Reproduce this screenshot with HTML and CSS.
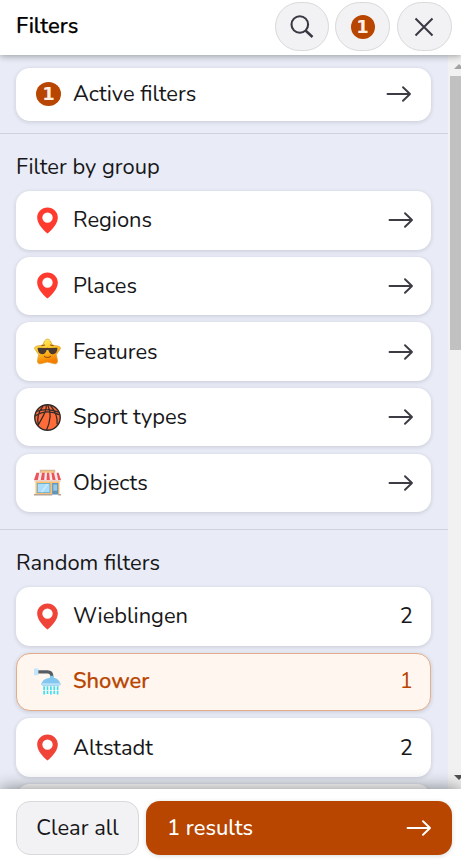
FILE: index.html
```
<!DOCTYPE html>
<html lang="en">
<head>
<meta charset="utf-8">
<title>Filters</title>
<link rel="stylesheet" href="styles.css">
</head>
<body>
<svg width="0" height="0" class="defs">
  <symbol id="arrow" viewBox="0 0 26 18"><path d="M1.500 9H24M17 2.200L24 9l-7 6.800" fill="none" stroke="currentColor" stroke-width="1.900" stroke-linecap="round" stroke-linejoin="round"/></symbol>
  <symbol id="pin" viewBox="0 0 28 28"><path fill-rule="evenodd" d="M14 .5C8 .5 3.300 5 3.300 11c0 6.500 5.700 12.500 10.700 16.500C19 23.500 24.700 17.500 24.700 11 24.700 5 20 .5 14 .5zM14 5.600a5.400 5.400 0 1 1 0 10.800 5.400 5.400 0 0 1 0-10.800z" fill="currentColor"/></symbol>
</svg>
<div class="app">
  <header class="header">
    <h1 class="title">Filters</h1>
    <button class="round search"><svg width="26" height="26" viewBox="0 0 26 26" fill="none" stroke="currentColor" stroke-width="2.100"><circle cx="10.800" cy="10.500" r="8.300"/><path d="M16.500 16.500l7 6.500" stroke-width="2.500"/></svg></button>
    <button class="round count"><span class="badge">1</span></button>
    <button class="round close"><svg width="20" height="20" viewBox="0 0 20 20" fill="none" stroke="currentColor" stroke-width="2"><path d="M1.500 1.500l17 17M18.500 1.500l-17 17"/></svg></button>
  </header>
  <div class="scroll">
    <main class="content">
      <section class="active-section">
        <a class="card active-card"><span class="badge small">1</span><span class="label">Active filters</span><svg class="arrow"><use href="#arrow"/></svg></a>
      </section>
      <section class="group">
        <h2 class="heading">Filter by group</h2>
        <a class="card"><svg class="icon pin"><use href="#pin"/></svg><span class="label">Regions</span><svg class="arrow"><use href="#arrow"/></svg></a>
        <a class="card"><svg class="icon pin"><use href="#pin"/></svg><span class="label">Places</span><svg class="arrow"><use href="#arrow"/></svg></a>
        <a class="card">
          <svg class="icon" viewBox="0 0 28 28">
            <defs><linearGradient id="gold" x2=".3" y2="1"><stop stop-color="#fff36b"/><stop offset=".5" stop-color="#ffc928"/><stop offset="1" stop-color="#f57c00"/></linearGradient></defs>
            <path d="M11 3Q14-.8 17 3L19 7.300 25 8.400Q29 9.500 26.400 12.600L23.200 17 24.500 24Q24 28 20 26.400L14 25 8 26.400Q4 28 3.500 24L4.800 17 1.600 12.600Q-1 9.500 3 8.400L9 7.300z" fill="url(#gold)" stroke="#d9a13a" stroke-width=".8"/>
            <path d="M3.800 10l9.200.4q1-.4 2 0l9.200-.4v1.500q-.5 5.300-4.700 5.300-3.700 0-4.600-4.300h-1.800q-.9 4.300-4.600 4.300-4.200 0-4.700-5.300z" fill="#4c3930"/>
            <path d="M8 8l3-.7M17 7.300l3 .7M10.800 19q3.200 2.600 6.400 0" fill="none" stroke="#975116" stroke-width="1.100" stroke-linecap="round"/>
          </svg>
          <span class="label">Features</span><svg class="arrow"><use href="#arrow"/></svg></a>
        <a class="card">
          <svg class="icon" viewBox="0 0 28 28"><circle cx="14" cy="14" r="13.200" fill="#ff6b39" stroke="#302a29" stroke-width="1.500"/><path d="M3 7.500Q14 3.500 25.500 8.500M1 12.500Q13 4.500 26 11M12.500 1Q13.500 5 10 11.500 7 17 4 22.500M14.300 1Q17 7 16.700 13 16 21 13 27M17 1.500Q25 11 24 21M9.500 2Q2 11 4.500 22" fill="none" stroke="#302a29" stroke-width="1.300"/></svg>
          <span class="label">Sport types</span><svg class="arrow"><use href="#arrow"/></svg></a>
        <a class="card">
          <svg class="icon" viewBox="0 0 28 28"><path d="M6 .8h16v5H6z" fill="#d4b69b"/><path d="M7.500 2.200h13v2h-13z" fill="#ffc978"/><path d="M1.500 8h25v18h-25z" fill="#ffc16e"/><path d="M2.500 4h23L28 11.500H0z" fill="#f5eef0"/><path d="M2.500 4h2.900L4 11.500H0zM8.300 4h2.900l-.6 7.500H7zM13.500 4h2.200l.8 7.500h-3.500zM18 4h2.700l1.700 7.500h-3.200zM23.500 4h2l2.500 7.500h-3z" fill="#ee535a"/><path d="M0 11.500h28v1.500H0z" fill="#ead6d8"/><path d="M3 14.500h14V25H3z" fill="#71aeca"/><path d="M4 15.500h12V24H4z" fill="#acdcfb"/><path d="M7 24l6-8.500h2L9 24z" fill="#caebff"/><path d="M18.800 14.500h6.400v12h-6.400z" fill="#6294ba"/><path d="M20 16h4v6.500h-4z" fill="#94c9e9"/><path d="M0 25.800h19v1.700H0zM25 25.800h3v1.700h-3z" fill="#b6a498"/></svg>
          <span class="label">Objects</span><svg class="arrow"><use href="#arrow"/></svg></a>
      </section>
      <section class="group random">
        <h2 class="heading">Random filters</h2>
        <a class="card"><svg class="icon pin muted"><use href="#pin"/></svg><span class="label">Wieblingen</span><span class="num">2</span></a>
        <a class="card selected">
          <svg class="icon" viewBox="0 0 28 28"><path d="M0 .5h4.500v7H0z" fill="#c1e5fa"/><path d="M4.500 4H14q4.500 0 4.500 5" fill="none" stroke="#565c61" stroke-width="3.300"/><path d="M16.500 8h4v2q5.500 1.500 6.500 5.500l.8 1.500-2 1.500H9.200l-2-1.500.8-1.500q1.500-4.500 8.500-5.500z" fill="#82c7f0"/><path d="M7.200 15.800h20.600l-1.500 2.200H8.700z" fill="#b9e0f8"/><path d="M10.500 19v8.500M14 19v8M17.500 19v8.500M21 19v8M24.500 19v8.500" stroke="#36e0f3" stroke-width="1.700" stroke-dasharray="4 .9"/></svg>
          <span class="label">Shower</span><span class="num">1</span></a>
        <a class="card"><svg class="icon pin muted"><use href="#pin"/></svg><span class="label">Altstadt</span><span class="num">2</span></a>
        <a class="card"></a>
      </section>
    </main>
    <div class="track"><span class="up"></span><span class="thumb"></span><span class="down"></span></div>
  </div>
  <footer class="footer">
    <button class="clear">Clear all</button>
    <button class="results"><span>1 results</span><svg class="arrow"><use href="#arrow"/></svg></button>
  </footer>
</div>
</body>
</html>
```
FILE: styles.css
```
* { box-sizing: border-box; }
body { margin: 0; font: 21.9px/30px Nunito, Lato, sans-serif; color: #171719; }
button { font: inherit; color: inherit; padding: 0; }
.defs { position: absolute; }
.app { height: 864px; display: flex; flex-direction: column; overflow: hidden; background: #e9ecf6; }
.header { height: 55px; flex: none; display: flex; align-items: flex-start; padding: 2px 9px 0 16px; background: #fff; box-shadow: 0 1px 7px rgba(0,0,0,.36); z-index: 2; }
.title { margin: 9px auto 0 0; font-size: 22px; line-height: 30px; font-weight: 500; color: #000; -webkit-text-stroke: .25px; }
.round { height: 49px; border: 1px solid #d9d9db; border-radius: 25px; background: #f2f2f4; display: flex; align-items: center; justify-content: center; color: #3a3943; }
.search { width: 54px; margin-right: 6px; }
.count { width: 55px; margin-right: 7px; }
.close { width: 55px; padding-right: 1px; }
.badge { width: 24px; height: 24px; border-radius: 50%; background: #b84500; color: #fff0e5; font: bold 18px/24px "DejaVu Sans", sans-serif; text-align: center; }
.badge.small { width: 25px; margin: 0 12px 0 2px; }
.scroll { flex: 1; min-height: 0; display: flex; }
.content { width: 448px; height: 734px; overflow: hidden; }
.active-section { height: 79px; padding: 13px 17px 0 16px; border-bottom: 1px solid #cfd2dc; }
.group { height: 396px; padding: 18px 17px 0 16px; border-bottom: 1px solid #cfd2dc; }
.heading { margin: 0 0 9.200px; font-size: 21.9px; line-height: 30px; font-weight: 400; }
.card { height: 58.400px; margin-bottom: 7.200px; padding: 0 18px; border-radius: 14px; background: #fff; box-shadow: 0 1px 4px rgba(20,24,45,.16); display: flex; align-items: center; }
.active-card { height: 53px; margin: 0; padding: 0 20px 1px 18px; }
.icon { width: 27px; height: 27px; flex: none; margin-right: 12px; }
.pin { color: #ff3b2f; }
.muted { color: #f04438; }
.label { flex: 1; }
.card .arrow { margin-right: -1px; }
.arrow { width: 26px; height: 18px; flex: none; color: #3d3c45; }
.selected { background: #fff6f0; color: #b84500; border: 1px solid #e3ad8b; padding: 0 17px 1px; }
.selected .label { font-weight: 500; -webkit-text-stroke: .25px; }
.track { width: 13px; background: #f1f1f1; display: flex; flex-direction: column; padding-left: 2px; overflow: hidden; }
.up, .down { border: 5px solid transparent; width: 0; height: 0; margin-left: 4px; }
.up { border-top: 0; border-bottom-color: #a3a3a3; margin-top: 9px; }
.thumb { height: 274px; background: #c1c1c1; margin-top: 7px; }
.down { border-bottom: 0; border-top-color: #505050; margin-top: auto; margin-bottom: 9px; }
.footer { height: 75px; flex: none; background: #fff; display: flex; gap: 7px; padding: 12px 9px 9px 16px; box-shadow: 0 -1px 16px rgba(0,0,0,.44); z-index: 2; }
.clear { width: 123px; border: 1px solid #d9d9db; border-radius: 14px; background: #f2f2f4; }
.results { flex: 1; border: 0; border-radius: 14px; background: #b84500; color: #fff; padding: 0 20px 0 21px; display: flex; align-items: center; justify-content: space-between; box-shadow: 0 1px 4px rgba(20,24,45,.16); }
.results span { font-weight: 500; }
.results .arrow { color: #fff; }
```
